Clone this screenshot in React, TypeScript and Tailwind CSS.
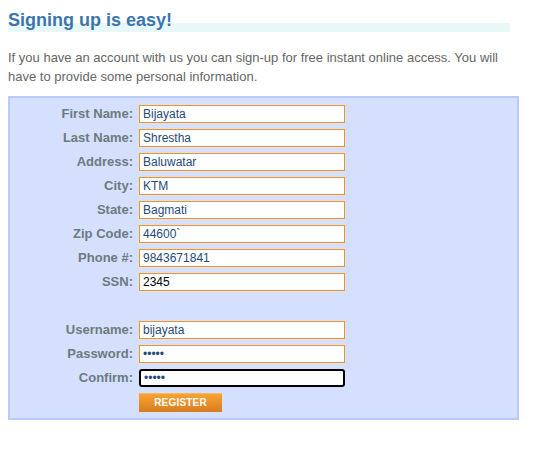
import React from 'react';

const fields = [
  { label: 'First Name:', value: 'Bijayata' },
  { label: 'Last Name:', value: 'Shrestha' },
  { label: 'Address:', value: 'Baluwatar' },
  { label: 'City:', value: 'KTM' },
  { label: 'State:', value: 'Bagmati' },
  { label: 'Zip Code:', value: '44600`' },
  { label: 'Phone #:', value: '9843671841' },
  { label: 'SSN:', value: '2345', autofill: true },
];

const Row: React.FC<{ label: string; children: React.ReactNode }> = ({ label, children }) => (
  <>
    <div className="text-right font-bold text-[13px] leading-[18px] text-[#6b7b7f]">{label}</div>
    <div>{children}</div>
  </>
);

const inputCls =
  'block w-[206px] h-[18px] border border-[#f0961e] bg-white px-[3px] text-[12px] leading-[16px] text-[#1f4a78] outline-none';

export default function App() {
  return (
    <div className="bg-white min-h-screen pl-[8px] font-['Liberation_Sans',Arial,sans-serif]">
      <h2 className="pt-[8px] w-[502px] h-[32px] text-[18px] leading-[24px] font-bold text-[#3a76ae] bg-[linear-gradient(to_bottom,transparent_23px,#e8f7f7_23px,#e8f7f7_33px,transparent_33px)]">
        Signing up is easy!
      </h2>
      <p className="mt-[16px] w-[505px] text-[13px] leading-[19px] text-[#666]">
        If you have an account with us you can sign-up for free instant online access. You will have to
        provide some personal information.
      </p>
      <div className="mt-[10px] w-[511px] h-[324px] border-2 border-[#bacbfa] bg-[#d4e0fd] pt-[7px]">
        <div className="grid grid-cols-[123px_206px] gap-x-[6px] gap-y-[6px]">
          {fields.map((f) => (
            <Row key={f.label} label={f.label}>
              <input
                readOnly
                value={f.value}
                className={`${inputCls} ${f.autofill ? 'bg-[#e8f0fe] text-black' : ''}`}
              />
            </Row>
          ))}
          <div className="h-[18px]" />
          <div className="h-[18px]" />
          <Row label="Username:">
            <input readOnly value="bijayata" className={inputCls} />
          </Row>
          <Row label="Password:">
            <input readOnly type="password" value="12345" className={`${inputCls} text-[9px]`} />
          </Row>
          <Row label="Confirm:">
            <input
              readOnly
              type="password"
              value="12345"
              className={`${inputCls} text-[9px] border-2 border-black rounded-[3px] px-[2px]`}
            />
          </Row>
          <div />
          <div>
            <button className="block w-[83px] h-[19px] border-t border-[#f6b860] bg-[linear-gradient(to_bottom,#fba232,#d47e20)] text-white text-[10px] font-bold leading-[18px] tracking-[0.2px]">
              REGISTER
            </button>
          </div>
        </div>
      </div>
    </div>
  );
}
